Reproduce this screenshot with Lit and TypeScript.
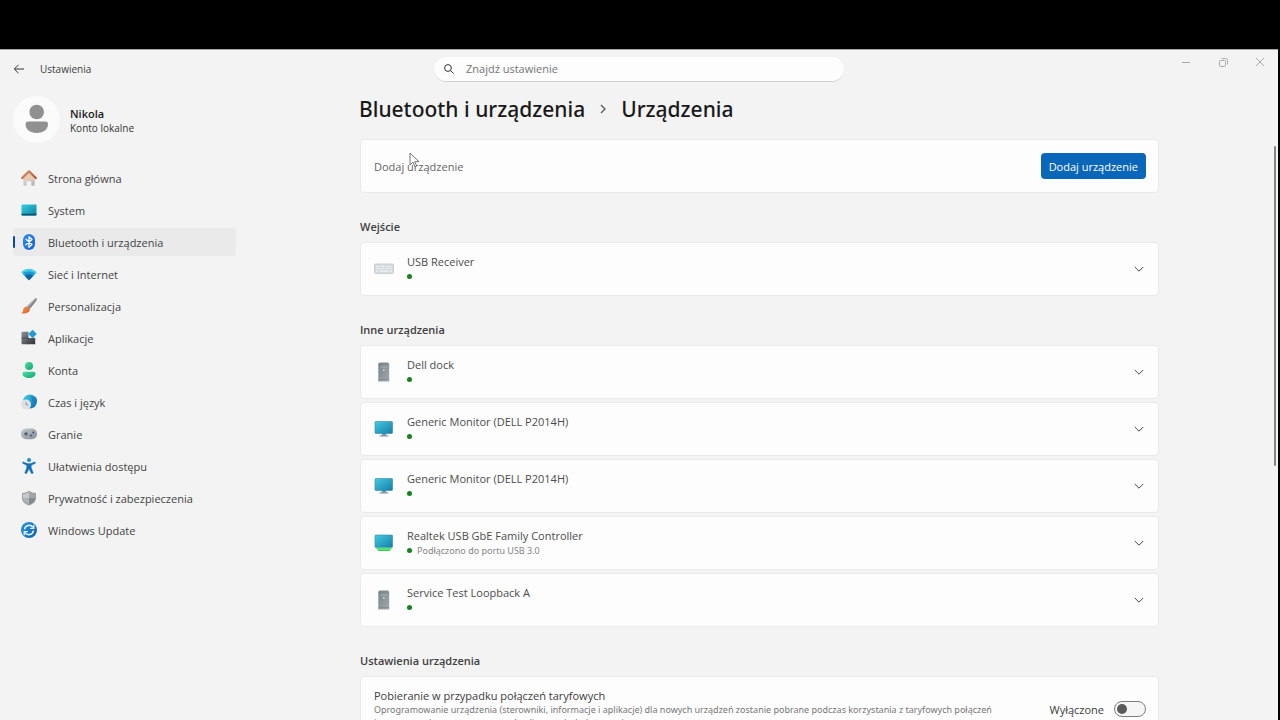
import { LitElement, html, css, svg, nothing } from "lit";
import { customElement, property, state } from "lit/decorators.js";
import { classMap } from "lit/directives/class-map.js";

const grad = (id: string, a: string, b: string) => svg`
  <linearGradient id=${id} x1="0" y1="0" x2="1" y2="1">
    <stop offset="0" stop-color=${a} /><stop offset="1" stop-color=${b} />
  </linearGradient>`;

const icons: Record<string, unknown> = {
  home: svg`<defs>${grad("hw", "#e6e3e4", "#b3b1b5")}${grad("hr", "#d98f5f", "#a9573a")}</defs>
    <path d="M2.400 8 8 2.500 13.600 8v7a.8.8 0 0 1-.8.8H10.300v-4.600H5.700v4.600H3.200a.8.800 0 0 1-.8-.8z" fill="url(#hw)" />
    <path d="M8 3 13.600 8v2.500H2.400V8z" fill="#e9c9b2" />
    <path d="M1.200 8 8 1.200 14.800 8" fill="none" stroke="url(#hr)" stroke-width="2.200" stroke-linecap="round" stroke-linejoin="round" />`,
  system: svg`<defs>${grad("sy", "#35cfe0", "#0f7f9f")}</defs>
    <rect x=".5" y="2.500" width="15" height="11" rx="1" fill="url(#sy)" />
    <path d="M.5 11.700h15v.8a1 1 0 0 1-1 1h-13a1 1 0 0 1-1-1z" fill="#0b5575" />`,
  bluetooth: svg`<defs>${grad("bt", "#2f8df0", "#1460d0")}</defs>
    <rect x="2" y="0" width="12" height="16" rx="6" fill="url(#bt)" />
    <path d="m5 5.300 6 5.200L8 13.200V2.800l3 2.700-6 5.200" fill="none" stroke="#fff" stroke-width="1.300" stroke-linejoin="round" stroke-linecap="round" />`,
  network: svg`<path d="M.3 6.300C2.300 4 5 2.800 8 2.800s5.700 1.200 7.700 3.500L8 14.200z" fill="#42cdea" />
    <path d="M1.600 7.600C3.500 6.200 5.700 5.600 8 5.600s4.500.6 6.400 2L8 14.200z" fill="#1b9bd2" />
    <path d="M3.800 9.900C5 9 6.500 8.600 8 8.600s3 .4 4.200 1.300L8 14.200z" fill="#0f65a6" />`,
  brush: svg`<defs>${grad("br", "#f6a04d", "#d9581b")}</defs>
    <path d="M15.600.5c.6.6.3 1.500-.4 2.500L8.800 11 5.800 8.400l7.200-7C14 .4 15 0 15.600.5z" fill="#7c8287" />
    <path d="M13 1.400c1-1 2-1.400 2.600-.9L7.200 9.600 5.800 8.400z" fill="#aab0b3" />
    <path d="M5.800 8.400 8.800 11c.2 3-2.500 4.800-8.500 4.500 2-1.200 1.500-2.500 2-4.500.5-1.700 2-2.600 3.500-2.600z" fill="url(#br)" />`,
  apps: svg`<defs>${grad("ap", "#8a9095", "#2e3338")}</defs>
    <path d="M1.500 1.800H7.500V8h6.700v6.300H1.500a1 1 0 0 1-1-1V2.800a1 1 0 0 1 1-1z" fill="url(#ap)" />
    <path d="M7.500 8v6.300M.5 8h7" stroke="#444b52" stroke-width=".7" />
    <rect x="8.600" y="1" width="6" height="6" rx=".8" transform="rotate(45 11.600 4)" fill="#209bdb" />`,
  account: svg`<defs>${grad("ac", "#4be0a2", "#12a574")}</defs>
    <circle cx="8" cy="4" r="4" fill="url(#ac)" />
    <path d="M3.200 9.800h9.600a1.700 1.700 0 0 1 1.700 1.700c0 2.900-2.900 4.500-6.500 4.500s-6.500-1.600-6.500-4.500a1.700 1.700 0 0 1 1.700-1.700z" fill="url(#ac)" />`,
  time: svg`<defs>${grad("ti", "#46d3e3", "#0865b0")}</defs>
    <circle cx="9" cy="7.500" r="7" fill="url(#ti)" />
    <path d="M6 1.600c3 .6 5.500 2.500 5 4.600-.4 1.800 2.600 2.500 1.600 5.300 3.400-2 4.200-6 2.400-8.200" fill="#1678bd" opacity=".6" />
    <circle cx="5" cy="10.600" r="5" fill="#dfe2e5" />
    <path d="M5 7.800v3h2.400" fill="none" stroke="#8b9298" stroke-width=".9" />`,
  game: svg`<defs>${grad("ga", "#c7cbd1", "#858c96")}</defs>
    <rect x="0" y="2.500" width="16" height="10.800" rx="5" fill="url(#ga)" />
    <path d="M5 5.800v4M3 7.800h4" stroke="#505862" stroke-width="1.200" />
    <circle cx="10" cy="9.500" r="1" fill="#31577d" /><circle cx="12.300" cy="6.500" r="1" fill="#31577d" />`,
  access: svg`<circle cx="8" cy="2" r="2" fill="#1b8fdc" />
    <path d="M2 3.800 6.300 5.600h3.400L14 3.800l.5 1.400L10.300 7.300v2.500l2 5.300-1.700.7L8 11l-2.600 4.800-1.700-.7 2-5.300V7.300L1.500 5.200z" fill="#1470bd" stroke="#1470bd" stroke-width=".4" stroke-linejoin="round" />`,
  shield: svg`<path d="M8 .8c2.200 1.500 4.400 2.200 7 2.300v4.700c0 3.700-2.600 6.200-7 7.700-4.400-1.500-7-4-7-7.700V3.100C3.600 3 5.800 2.300 8 .8z" fill="#9a9d9f" />
    <path d="M8 1.900c1.900 1.200 3.900 1.900 6.100 2V8H8z" fill="#a4a7a9" />
    <path d="M8 1.900C6.100 3.100 4.100 3.800 1.900 3.900V8H8z" fill="#c6c8c9" />
    <path d="M1.900 8H8v6.400C4.500 13.100 1.900 11 1.900 8z" fill="#b0b2b4" />
    <path d="M14.100 8H8v6.400c3.500-1.300 6.100-3.400 6.100-6.400z" fill="#86898c" />`,
  update: svg`<defs>${grad("up", "#2596e0", "#0f5fb4")}</defs>
    <circle cx="8" cy="8" r="8" fill="url(#up)" />
    <path d="M3.600 7.300A4.600 4.600 0 0 1 12 5.400M12.400 8.700A4.600 4.600 0 0 1 4 10.600" fill="none" stroke="#e8f7ff" stroke-width="1.500" />
    <path d="M12.800 2.800v3.600H9.200M3.200 13.200V9.600h3.600" fill="none" stroke="#e8f7ff" stroke-width="1.300" />`,
};

const deviceIcons: Record<string, unknown> = {
  keyboard: svg`<rect x=".5" y="5" width="19" height="9.500" rx="1" fill="#d5dade" stroke="#c9ced3" />
    <path d="M2 7.500h16M2 9.700h16" stroke="#f5f7f9" stroke-width="1" stroke-dasharray="1.400 .8" />
    <path d="M2 12.200h2M5.500 12.200h9M16 12.200h2" stroke="#f5f7f9" />`,
  tower: svg`<defs>${grad("tw", "#76848b", "#a2a8ac")}</defs>
    <path d="M5.500.5h8.500l1.200 1.500v17.500H4.300V2z" fill="url(#tw)" />
    <path d="M4.300 2h10.900M4.300 17.500h10.900" stroke="#7d888e" stroke-width=".7" />
    <path d="M6.500 5h6.500" stroke="#b4bfc5" stroke-width=".8" /><circle cx="9.800" cy="8" r="1" fill="#b9d0d9" />`,
  monitor: svg`<defs>${grad("mo", "#45cbdf", "#147dab")}</defs>
    <path d="M8 14h4l.5 2.500h2v.9h-9v-.9h2z" fill="#7797ad" />
    <rect x="1" y="2.500" width="17.500" height="12" rx=".8" fill="url(#mo)" stroke="#2f86ab" stroke-width=".6" />`,
  network: svg`<defs>${grad("ne", "#45cbdf", "#147dab")}</defs>
    <rect x="1" y="2" width="17.500" height="12.500" rx=".8" fill="url(#ne)" stroke="#2f86ab" stroke-width=".6" />
    <path d="M2.500 14.800h15v1.800h-15z" fill="#4fe868" /><path d="M4 16.400h12v1.600H4z" fill="#35d455" />`,
};

@customElement("device-card")
class DeviceCard extends LitElement {
  static styles = css`
    :host { display: block; }
    .card {
      display: flex; align-items: center; width: 100%; height: 54px; box-sizing: border-box;
      padding: 0 14px 0 13px; border: 1px solid #eaeaea; border-radius: 4px; background: #fdfdfd;
      font: inherit; color: inherit; text-align: left;
    }
    .icon { width: 20px; height: 20px; margin-right: 13px; flex: none; }
    .body { flex: 1; display: grid; }
    .name { line-height: 14px; color: #4c4c4c; }
    .status { display: flex; align-items: center; gap: 5px; height: 14px; font-family: "Noto Sans", sans-serif; font-size: 9px; color: #858585; }
    .dot { width: 5px; height: 5px; border-radius: 50%; background: #16821a; }
    .chevron { width: 10px; height: 10px; fill: none; stroke: #454545; }
  `;
  @property() name = "";
  @property() icon = "";
  @property() note = "";
  render() {
    return html`<button class="card" aria-expanded="false">
      <svg class="icon" viewBox="0 0 20 20" aria-hidden="true">${deviceIcons[this.icon]}</svg>
      <span class="body">
        <span class="name">${this.name}</span>
        <span class="status"><span class="dot"></span>${this.note ? html`<span>${this.note}</span>` : nothing}</span>
      </span>
      <svg class="chevron" viewBox="0 0 10 10" aria-hidden="true"><path d="m.8 3 4.200 4.200L9.200 3" /></svg>
    </button>`;
  }
}

const navigation = [
  ["home", "Strona główna"],
  ["system", "System"],
  ["bluetooth", "Bluetooth i urządzenia"],
  ["network", "Sieć i Internet"],
  ["brush", "Personalizacja"],
  ["apps", "Aplikacje"],
  ["account", "Konta"],
  ["time", "Czas i język"],
  ["game", "Granie"],
  ["access", "Ułatwienia dostępu"],
  ["shield", "Prywatność i zabezpieczenia"],
  ["update", "Windows Update"],
];

const otherDevices = [
  { name: "Dell dock", icon: "tower", note: "" },
  { name: "Generic Monitor (DELL P2014H)", icon: "monitor", note: "" },
  { name: "Generic Monitor (DELL P2014H)", icon: "monitor", note: "" },
  { name: "Realtek USB GbE Family Controller", icon: "network", note: "Podłączono do portu USB 3.0" },
  { name: "Service Test Loopback A", icon: "tower", note: "" },
];

@customElement("app-root")
class AppRoot extends LitElement {
  static styles = css`
    :host {
      display: block; height: 100vh; overflow: hidden; background: #000;
      font-family: "Open Sans", "Noto Sans", sans-serif; font-size: 11px; color: #3c3c3c;
    }
    * { box-sizing: border-box; }
    button, input { font: inherit; color: inherit; }
    button { border: 0; background: none; padding: 0; }
    .screen { height: 100%; padding: 49px 2px 0 0; position: relative; }
    .window { height: 100%; background: #f3f3f3; border-top: 1px solid #a5a5a5; display: flex; flex-direction: column; overflow: hidden; }
    .titlebar { display: grid; grid-template-columns: 1fr 410px 1fr; align-items: start; height: 38px; flex: none; }
    .left { display: flex; align-items: center; gap: 15px; padding-left: 13px; height: 38px; font-size: 10px; }
    .back { width: 12px; height: 12px; display: flex; }
    .back svg { width: 12px; height: 12px; fill: none; stroke: #333; }
    .search {
      display: flex; align-items: center; height: 25px; margin-top: 7px; border-radius: 13px;
      padding: 0 10px; gap: 12px; background: #fdfdfd; border-bottom: 1px solid #cfcfcf;
    }
    .search svg { width: 10px; height: 10px; fill: none; stroke: #333; flex: none; }
    .search input { flex: 1; border: 0; outline: 0; padding: 0 0 2px; background: none; min-width: 0; }
    .search input::placeholder { color: #747474; opacity: 1; }
    .controls { display: flex; justify-content: flex-end; gap: 27px; padding: 7px 13px 0 0; }
    .controls button { width: 10px; height: 10px; display: flex; }
    .controls svg { width: 10px; height: 10px; fill: none; stroke: #aaa; }
    .layout { flex: 1; min-height: 0; display: flex; }
    .sidebar { width: 236px; flex: none; padding-left: 13px; }
    .profile { display: flex; align-items: center; gap: 10px; height: 48px; margin-top: 7px; }
    .avatar { width: 47px; height: 47px; }
    .who { display: grid; color: #333; font-size: 10px; line-height: 14px; padding-top: 3px; }
    .who strong { font-size: 11px; font-weight: 600; color: #1c1c1c; }
    nav { display: grid; gap: 4px; margin-top: 21px; }
    .item {
      display: flex; align-items: center; gap: 11px; height: 28px; padding-left: 8px; border-radius: 4px;
      color: #444; text-decoration: none; position: relative;
    }
    .item svg { width: 16px; height: 16px; }
    .active { background: #eaeaea; }
    .active::before { content: ""; position: absolute; left: 0; top: 8px; width: 2px; height: 12px; border-radius: 1px; background: #0a4aa8; }
    main { flex: 1; min-width: 0; padding: 5px 119px 0 124px; }
    h1 { display: flex; align-items: center; gap: 14px; margin: 0 -1px; height: 32px; font-family: "Noto Sans", sans-serif; font-size: 21px; font-weight: 500; color: #191919; }
    h1 svg { width: 8px; height: 10px; fill: none; stroke: #555; stroke-width: 1.300; }
    .panel { border: 1px solid #eaeaea; border-radius: 4px; background: #fdfdfd; padding: 0 13px; display: flex; align-items: center; justify-content: space-between; }
    .add { height: 54px; margin-top: 14px; padding-right: 12px; color: #666; }
    .primary { height: 26px; padding: 0 8px; border-radius: 4px; background: #0a66b8; color: #fff; font-weight: 500; }
    h2 { margin: 26px 0 7px; line-height: 16px; font-size: 11px; font-weight: 600; color: #404040; }
    .list { display: grid; gap: 3px; }
    .metered { height: 66px; padding-right: 12px; }
    .copy { flex: 1; max-width: 645px; display: grid; }
    .copy label { line-height: 14px; }
    .copy p { margin: 0; font-family: "Noto Sans", sans-serif; font-size: 9px; line-height: 13px; color: #777; }
    .toggle { display: flex; align-items: center; gap: 10px; }
    .toggle input {
      appearance: none; margin: 0; width: 32px; height: 16px; border: 1px solid #7d7d7d; border-radius: 8px;
      background: #f6f6f6; display: flex; align-items: center; padding: 0 2px;
    }
    .toggle input::before { content: ""; width: 10px; height: 10px; border-radius: 50%; background: #5a5a5a; }
    .toggle input:checked { background: #0a66b8; justify-content: flex-end; }
    .scroll { position: absolute; right: 4px; top: 146px; width: 2px; height: 320px; border-radius: 1px; background: #858585; }
    .pointer { position: absolute; left: 409px; top: 152px; width: 11px; height: 16px; }
  `;

  @state() private metered = false;

  render() {
    return html`<div class="screen">
      <div class="window">
        <header class="titlebar">
          <div class="left">
            <button class="back" aria-label="Wstecz"><svg viewBox="0 0 12 12"><path d="M11 6H1.500M5.500 1.800 1.300 6l4.200 4.200" /></svg></button>
            <span>Ustawienia</span>
          </div>
          <label class="search">
            <svg viewBox="0 0 10 10"><circle cx="4" cy="4" r="3.400" /><path d="m6.500 6.500 3.200 3.200" /></svg>
            <input type="text" placeholder="Znajdź ustawienie" aria-label="Znajdź ustawienie" />
          </label>
          <div class="controls">
            <button aria-label="Minimalizuj"><svg viewBox="0 0 10 10"><path d="M1 5.500h8" /></svg></button>
            <button aria-label="Przywróć"><svg viewBox="0 0 10 10"><rect x="1.500" y="3.500" width="6" height="6" rx="1" /><path d="M3.500 1.500h4a2 2 0 0 1 2 2v4" /></svg></button>
            <button aria-label="Zamknij"><svg viewBox="0 0 10 10"><path d="m1 1 8 8M9 1 1 9" /></svg></button>
          </div>
        </header>
        <div class="layout">
          <aside class="sidebar">
            <div class="profile">
              <svg class="avatar" viewBox="0 0 47 47" aria-hidden="true">
                <circle cx="23.500" cy="23.500" r="23.500" fill="#fbfbfb" />
                <circle cx="23.700" cy="16" r="7.300" fill="#909090" />
                <path d="M15 25.500h17.500a2.500 2.500 0 0 1 2.500 2.500C35 33.500 30.500 37 23.700 37S12.500 33.500 12.500 28A2.500 2.500 0 0 1 15 25.500z" fill="#909090" />
              </svg>
              <div class="who"><strong>Nikola</strong><span>Konto lokalne</span></div>
            </div>
            <nav>
              ${navigation.map(([icon, label]) => html`<a href="#${icon}" class=${classMap({ item: true, active: icon === "bluetooth" })}>
                <svg viewBox="0 0 16 16" aria-hidden="true">${icons[icon]}</svg><span>${label}</span></a>`)}
            </nav>
          </aside>
          <main>
            <h1><span>Bluetooth i urządzenia</span><svg viewBox="0 0 8 10"><path d="m2 1 4 4-4 4" /></svg><span>Urządzenia</span></h1>
            <section class="panel add"><span>Dodaj urządzenie</span><button class="primary">Dodaj urządzenie</button></section>
            <h2>Wejście</h2>
            <device-card name="USB Receiver" icon="keyboard"></device-card>
            <h2>Inne urządzenia</h2>
            <div class="list">
              ${otherDevices.map((d) => html`<device-card .name=${d.name} .icon=${d.icon} .note=${d.note}></device-card>`)}
            </div>
            <h2>Ustawienia urządzenia</h2>
            <section class="panel metered">
              <div class="copy">
                <label for="metered">Pobieranie w przypadku połączeń taryfowych</label>
                <p>Oprogramowanie urządzenia (sterowniki, informacje i aplikacje) dla nowych urządzeń zostanie pobrane podczas korzystania z taryfowych połączeń internetowych, za co mogą zostać naliczone dodatkowe opłaty</p>
              </div>
              <div class="toggle">
                <span>Wyłączone</span>
                <input id="metered" type="checkbox" role="switch" .checked=${this.metered}
                  @change=${(e: Event) => (this.metered = (e.target as HTMLInputElement).checked)} />
              </div>
            </section>
          </main>
        </div>
      </div>
      <div class="scroll"></div>
      <svg class="pointer" viewBox="0 0 11 16" aria-hidden="true"><path d="M1 1v12l3-2.800 2 4.500 1.700-.8-2-4.200H10z" fill="#fff" stroke="#666" stroke-width=".9" /></svg>
    </div>`;
  }
}
